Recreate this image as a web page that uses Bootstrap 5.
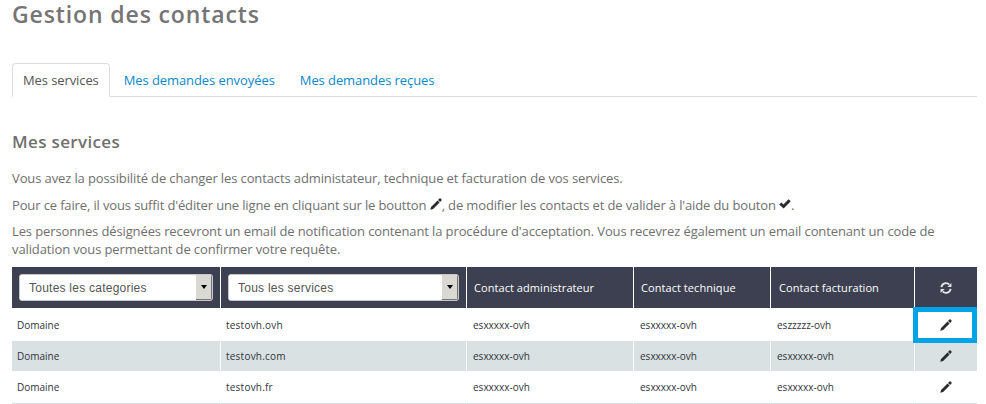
<!DOCTYPE html>
<html lang="fr">
<head>
<meta charset="utf-8">
<meta name="viewport" content="width=device-width, initial-scale=1">
<title>Gestion des contacts</title>
<link href="https://cdn.jsdelivr.net/npm/bootstrap@5.3.0/dist/css/bootstrap.min.css" rel="stylesheet">
<style>
body{font-family:"Open Sans",sans-serif;font-size:13px;line-height:18px;color:#6f6f6f;background:#fff;overflow:hidden}
.page{width:965px;margin-left:12px}
h1{font-size:23px;line-height:28px;font-weight:600;letter-spacing:.88px;color:#757575}
h2{font-size:17px;line-height:24px;font-weight:600;letter-spacing:.35px;color:#6f6f6f;margin:33px 0 15px}
.page p{margin:0 0 9px;white-space:nowrap;letter-spacing:-.118px}
.page p.howto{margin-bottom:8px;letter-spacing:-.135px}
.nav-tabs{margin-top:35px;--bs-nav-tabs-border-color:#ddd;--bs-nav-tabs-border-radius:4px;--bs-nav-tabs-link-active-border-color:#ddd #ddd #fff}
.nav-tabs .nav-link{padding:7px 10px;line-height:18px;height:34px;color:#0b88ca;margin-right:3px;letter-spacing:-.08px}
.nav-tabs .nav-link.active{color:#555;letter-spacing:-.1px}
.ico{width:12px;height:12px;fill:#292d30;display:inline-block;vertical-align:-2px}
p .ico{vertical-align:1px;margin-bottom:-1px}
.contacts{table-layout:fixed;width:965px;margin:0;font-size:10px;line-height:14px;border-collapse:separate;border-spacing:0}
.contacts>:not(caption)>*>*{border:0;padding:0 5px;vertical-align:middle;box-shadow:none;color:#30343a;background:#fff}
.contacts>*>tr>*+*{border-left:1px solid #fff}
.contacts thead th{height:41px;background:#3c4050;color:#fff;font-weight:400;font-size:11px;padding:0 7px;letter-spacing:.06px}
.contacts thead th:nth-child(5){padding-left:8px}
.contacts tbody td{height:33px}
.contacts tbody td:nth-child(2){letter-spacing:.22px}
.contacts tbody td:nth-child(n+3):not(:last-child){padding-left:6px}
.contacts tbody tr.even td{height:30px;background:#d9e1e3}
.contacts tbody tr.last td{height:33px;border-bottom:1px solid #d9e1e3}
.filter{height:27px;border:1px solid #c8c8cc;border-radius:3px;background:#fff;overflow:hidden}
.filter select{appearance:none;border:0;background:#fff;color:#555;font:12px/23px "Liberation Sans",Arial,sans-serif;letter-spacing:.24px;padding:2px 9px 0;outline:0;min-width:0}
.drop{width:16px;background:#d9d8d2;border-right:1px solid #77756f;border-bottom:1px solid #77756f}
.drop svg{width:6px;height:4px}
.contacts tbody td.focus-cell{position:relative}
.focus-cell::after{content:"";position:absolute;inset:-1px 0 -2px -2px;border:5px solid #00a2e8;z-index:2}
</style>
<script src="https://cdn.jsdelivr.net/npm/bootstrap@5.3.0/dist/js/bootstrap.bundle.min.js"></script>
</head>
<body>
<svg class="d-none" xmlns="http://www.w3.org/2000/svg">
<symbol id="pencil" viewBox="0 0 12 12"><path d="M.3 11.7 1 8.9 7.5 2.5 9.6 4.6 3.1 11zM8 2 9.4.6Q10.1.1 10.7.6L11.5 1.4Q12 2 11.5 2.6L10.1 4.1z"/></symbol>
<symbol id="check" viewBox="0 0 12 12"><path d="M.2 6.4 2.3 4.4 4.5 6.6 9.5 1.3 11.8 3.3 4.6 10.6z"/></symbol>
<symbol id="refresh" viewBox="0 0 12 12"><path d="M1.4 5.2A4.6 4.6 0 0 1 9.3 2.6M10.6 6.8A4.6 4.6 0 0 1 2.7 9.4" fill="none" stroke="#e8e8ea" stroke-width="1.8"/><path d="M11.4 1v4H7.4zM.6 11V7h4z" fill="#e8e8ea"/></symbol>
</svg>
<main class="page">
<h1 class="m-0">Gestion des contacts</h1>
<ul class="nav nav-tabs">
<li class="nav-item"><a class="nav-link active" href="#">Mes services</a></li>
<li class="nav-item"><a class="nav-link" href="#">Mes demandes envoyées</a></li>
<li class="nav-item"><a class="nav-link" href="#">Mes demandes reçues</a></li>
</ul>
<h2>Mes services</h2>
<p>Vous avez la possibilité de changer les contacts administateur, technique et facturation de vos services.</p>
<p class="howto">Pour ce faire, il vous suffit d'éditer une ligne en cliquant sur le boutton <svg class="ico"><use href="#pencil"/></svg>, de modifier les contacts et de valider à l'aide du bouton <svg class="ico"><use href="#check"/></svg>.</p>
<p>Les personnes désignées recevront un email de notification contenant la procédure d'acceptation. Vous recevrez également un email contenant un code de<br>validation vous permettant de confirmer votre requête.</p>
<table class="table contacts">
<colgroup><col style="width:208px"><col style="width:246px"><col style="width:167px"><col style="width:137px"><col style="width:144px"><col style="width:63px"></colgroup>
<thead><tr>
<th><div class="filter d-flex"><select class="flex-grow-1"><option>Toutes les categories</option></select><span class="drop d-flex align-items-center justify-content-center"><svg viewBox="0 0 6 4"><path d="M0 0h6L3 4z"/></svg></span></div></th>
<th><div class="filter d-flex"><select class="flex-grow-1"><option>Tous les services</option></select><span class="drop d-flex align-items-center justify-content-center"><svg viewBox="0 0 6 4"><path d="M0 0h6L3 4z"/></svg></span></div></th>
<th>Contact administrateur</th><th>Contact technique</th><th>Contact facturation</th>
<th class="text-center"><svg class="ico"><use href="#refresh"/></svg></th>
</tr></thead>
<tbody>
<tr><td>Domaine</td><td>testovh.ovh</td><td>esxxxxx-ovh</td><td>esxxxxx-ovh</td><td>eszzzzz-ovh</td><td class="text-center focus-cell"><svg class="ico"><use href="#pencil"/></svg></td></tr>
<tr class="even"><td>Domaine</td><td>testovh.com</td><td>esxxxxx-ovh</td><td>esxxxxx-ovh</td><td>esxxxxx-ovh</td><td class="text-center"><svg class="ico"><use href="#pencil"/></svg></td></tr>
<tr class="last"><td>Domaine</td><td>testovh.fr</td><td>esxxxxx-ovh</td><td>esxxxxx-ovh</td><td>esxxxxx-ovh</td><td class="text-center"><svg class="ico"><use href="#pencil"/></svg></td></tr>
</tbody>
</table>
</main>
</body>
</html>
